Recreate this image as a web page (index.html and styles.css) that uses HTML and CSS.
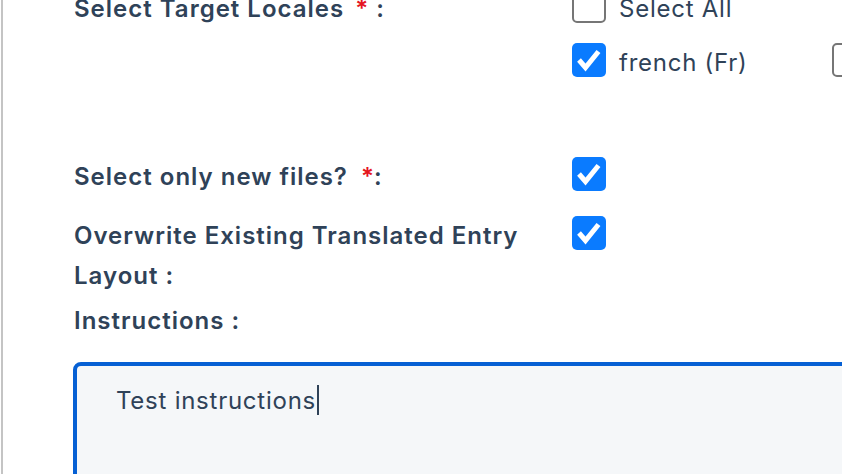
FILE: index.html
```html
<!DOCTYPE html>
<html lang="en">
<head>
<meta charset="utf-8">
<title>Translation request</title>
<link rel="stylesheet" href="styles.css">
</head>
<body>
<div class="panel">
  <div class="row row-locales">
    <div class="label">Select Target Locales <span class="req req-a">*</span> :</div>
    <div class="locales">
      <label class="opt opt-all"><span class="cb"></span><span class="opt-text">Select All</span></label>
      <label class="opt"><span class="cb cb-on"><svg viewBox="0 0 34 34"><polyline points="7,17 13.5,24.5 26.5,8.5"/></svg></span><span class="opt-text">french (Fr)</span></label>
      <label class="opt"><span class="cb"></span><span class="opt-text">german (De)</span></label>
    </div>
  </div>

  <div class="row row-new">
    <div class="label">Select only new files? <span class="req req-b">*</span>:</div>
    <span class="cb cb-on"><svg viewBox="0 0 34 34"><polyline points="7,17 13.5,24.5 26.5,8.5"/></svg></span>
  </div>

  <div class="row row-overwrite">
    <div class="label">Overwrite Existing Translated Entry Layout :</div>
    <span class="cb cb-on"><svg viewBox="0 0 34 34"><polyline points="7,17 13.5,24.5 26.5,8.5"/></svg></span>
  </div>

  <div class="row row-instr">
    <div class="label">Instructions :</div>
  </div>

  <div class="textarea" role="textbox" aria-multiline="true">Test instructions<span class="caret"></span></div>
</div>
</body>
</html>
```

FILE: styles.css
```css
* { box-sizing: border-box; }

html, body {
  margin: 0;
  padding: 0;
  background: #ffffff;
  overflow: hidden;
  width: 842px;
  height: 474px;
}

body {
  font-family: Inter, "Liberation Sans", sans-serif;
  font-size: 24px;
  line-height: 40px;
  color: #2f4258;
}

.panel {
  margin-left: 1px;
  border-left: 2px solid #c4c4c4;
  padding-left: 71px;
  min-height: 600px;
}

.row {
  display: flex;
  align-items: flex-start;
}

.label {
  width: 498px;
  flex: none;
  font-weight: 600;
  letter-spacing: 1px;
  padding-right: 20px;
}

.req {
  color: #e5141f;
}
.req-a { margin: 0 0 0 4px; }
.req-b { margin-left: 6px; letter-spacing: 0; }

.row-locales {
  margin-top: -11px;
}

.locales {
  display: grid;
  grid-template-columns: 260px 260px;
  row-gap: 14px;
}

.opt-all {
  grid-column: 1 / -1;
}

.opt {
  display: flex;
  align-items: flex-start;
  gap: 13px;
  white-space: nowrap;
}

.opt-text {
  font-weight: 400;
  letter-spacing: 0.75px;
}

.cb {
  flex: none;
  width: 34px;
  height: 34px;
  border: 2px solid #767676;
  border-radius: 5px;
  background: #ffffff;
  display: flex;
  align-items: center;
  justify-content: center;
}

.cb-on {
  border: none;
  background: #0a7bff;
}

.cb svg {
  width: 34px;
  height: 34px;
  display: block;
}

.cb svg polyline {
  fill: none;
  stroke: #ffffff;
  stroke-width: 5;
  stroke-linecap: butt;
  stroke-linejoin: miter;
}

.row-new {
  margin-top: 74px;
}

.row-overwrite {
  margin-top: 19px;
}

.row-instr {
  margin-top: 5px;
}

.textarea {
  margin-top: 21px;
  margin-left: -1px;
  width: 800px;
  height: 160px;
  border: 4px solid #0660d4;
  border-radius: 8px;
  background: #f5f7f9;
  padding: 15px 0 0 39px;
  font-weight: 400;
  letter-spacing: 0.75px;
  white-space: nowrap;
}

.caret {
  display: inline-block;
  width: 2px;
  height: 30px;
  background: #2f4258;
  vertical-align: -6px;
  margin-left: 1px;
}
```
